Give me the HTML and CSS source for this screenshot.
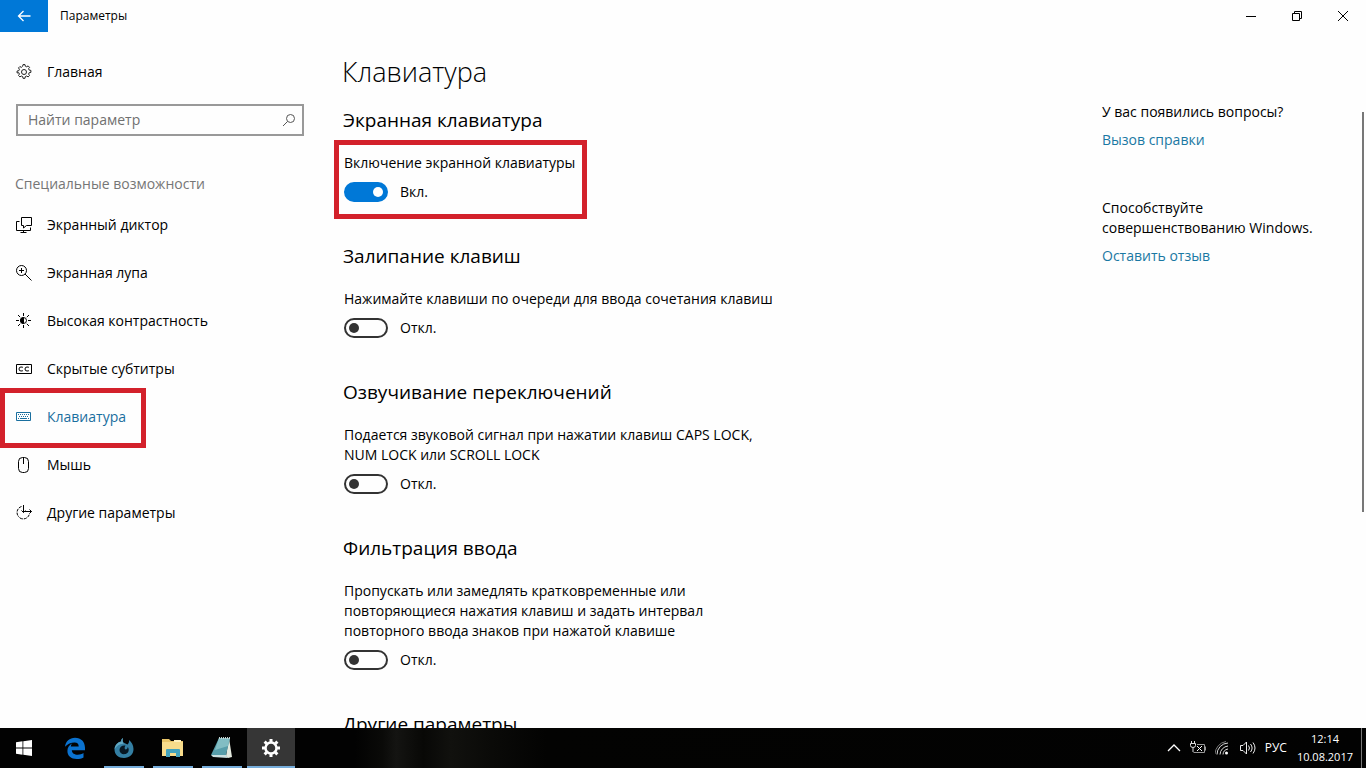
FILE: index.html
```html
<!DOCTYPE html>
<html lang="ru">
<head>
    <meta charset="UTF-8">
    <meta name="viewport" content="width=device-width, initial-scale=1.0">
    <title>Параметры</title>
    <link rel="stylesheet" href="styles.css">
</head>
<body>

    <header class="titlebar">
        <button class="back" aria-label="Назад">
            <svg width="14" height="12" viewBox="0 0 14 12" fill="none" stroke="#fff" stroke-width="1.300"><path d="M13.500 6H1.500M6.500 1L1.500 6l5 5"/></svg>
        </button>
        <span class="window-title">Параметры</span>
        <div class="window-buttons">
            <button aria-label="Свернуть">
                <svg width="12" height="12" viewBox="0 0 12 12" fill="none" stroke="#000"><path d="M1 6.500h10"/></svg>
            </button>
            <button aria-label="Восстановить">
                <svg width="12" height="12" viewBox="0 0 12 12" fill="none" stroke="#000"><path d="M1.500 3.500h7v7h-7zM3.500 3.500v-2h7v7h-2"/></svg>
            </button>
            <button aria-label="Закрыть">
                <svg width="12" height="12" viewBox="0 0 12 12" fill="none" stroke="#000"><path d="M1 1l10 10M11 1L1 11"/></svg>
            </button>
        </div>
    </header>

    <div class="window">
        <nav class="sidebar">
            <a class="nav-link" href="#">
                <svg width="16" height="16" viewBox="0 0 16 16" fill="none" stroke="#222"><circle cx="8" cy="8" r="2.500"/><path d="M6.700 2.200L7 .6h2l.3 1.600 1.400.6 1.400-.9 1.400 1.400-.9 1.400.6 1.400 1.700.3v2l-1.700.3-.6 1.400.9 1.400-1.400 1.400-1.400-.9-1.400.6-.3 1.700H7l-.3-1.700-1.400-.6-1.400.9-1.400-1.400.9-1.400-.6-1.400L1.100 9V7l1.700-.3.6-1.400-.9-1.400 1.400-1.400 1.400.9z"/></svg>
                Главная
            </a>

            <form class="search">
                <input type="search" placeholder="Найти параметр" aria-label="Найти параметр">
                <button type="button" aria-label="Поиск">
                    <svg width="14" height="14" viewBox="0 0 14 14" fill="none" stroke="#555"><circle cx="8.500" cy="5.500" r="4"/><path d="M5.500 8.500L1 13"/></svg>
                </button>
            </form>

            <h2 class="nav-title">Специальные возможности</h2>
            <a class="nav-link" href="#">
                <svg width="16" height="16" viewBox="0 0 16 16" fill="none" stroke="#000"><path d="M5.500.5h10v8h-5l-3 2.500V8.500h-2zM3.500 4.500h-3v9h14v-3M7.500 13.500v2M4.500 15.500h6"/></svg>
                Экранный диктор
            </a>
            <a class="nav-link" href="#">
                <svg width="16" height="16" viewBox="0 0 16 16" fill="none" stroke="#000"><circle cx="5.500" cy="5.500" r="5"/><path d="M9 9l6.500 6.500M3 5.500h5M5.500 3v5"/></svg>
                Экранная лупа
            </a>
            <a class="nav-link" href="#">
                <svg width="16" height="16" viewBox="0 0 16 16" fill="none" stroke="#000"><circle cx="7.500" cy="7.500" r="3"/><path d="M7.500 4.500a3 3 0 0 0 0 6z" fill="#000"/><path d="M7.500 0v3M7.500 12v3M0 7.500h3M12 7.500h3M2 2l2.200 2.200M10.800 10.800L13 13M13 2l-2.200 2.200M4.200 10.800L2 13"/></svg>
                Высокая контрастность
            </a>
            <a class="nav-link" href="#">
                <svg width="16" height="16" viewBox="0 0 16 16" fill="none" stroke="#000"><path d="M.5 3.500h15v9H.5z"/><path d="M7 6.500Q6.500 6 5 6 3 6 3 8t2 2q1.500 0 2-.5M13 6.500Q12.500 6 11 6 9 6 9 8t2 2q1.500 0 2-.5"/></svg>
                Скрытые субтитры
            </a>
            <a class="nav-link current" href="#" aria-current="page">
                <svg width="16" height="16" viewBox="0 0 16 16" fill="none" stroke="#1a6f9f"><path d="M.5 3.500h14v8H.5z"/><path d="M2 5.500h11M3 7.500h10" stroke-dasharray="1 1"/><path d="M2 9.500h1M4 9.500h7M12 9.500h1"/></svg>
                Клавиатура
            </a>
            <a class="nav-link" href="#">
                <svg width="16" height="16" viewBox="0 0 16 16" fill="none" stroke="#000"><rect x="2.500" y=".5" width="10" height="15" rx="4"/><path d="M7.500 1v6"/></svg>
                Мышь
            </a>
            <a class="nav-link" href="#">
                <svg width="16" height="16" viewBox="0 0 16 16" fill="none" stroke="#000"><path d="M5.500 1.500a6.300 6.300 0 0 0-2 11" stroke-dasharray="3 1"/><path d="M4 13a6.300 6.300 0 0 0 9.500-4.500" stroke-dasharray="3 1"/><path d="M7.500 0v7.500M5.500 5.500l2 2 2-2M7.500 6.500h8M13.500 4.500l2 2-2 2"/></svg>
                Другие параметры
            </a>
        </nav>

        <main class="content">
            <h1>Клавиатура</h1>

            <section>
                <h2>Экранная клавиатура</h2>
                <div class="setting marked">
                    <p id="osk">Включение экранной клавиатуры</p>
                    <label class="toggle"><input type="checkbox" aria-describedby="osk" checked> Вкл.</label>
                </div>
            </section>

            <section>
                <h2>Залипание клавиш</h2>
                <div class="setting">
                    <p id="sticky">Нажимайте клавиши по очереди для ввода сочетания клавиш</p>
                    <label class="toggle"><input type="checkbox" aria-describedby="sticky"> Откл.</label>
                </div>
            </section>

            <section>
                <h2>Озвучивание переключений</h2>
                <div class="setting">
                    <p id="sound">Подается звуковой сигнал при нажатии клавиш CAPS LOCK,<br>NUM LOCK или SCROLL LOCK</p>
                    <label class="toggle"><input type="checkbox" aria-describedby="sound"> Откл.</label>
                </div>
            </section>

            <section>
                <h2>Фильтрация ввода</h2>
                <div class="setting">
                    <p id="filter">Пропускать или замедлять кратковременные или<br>повторяющиеся нажатия клавиш и задать интервал<br>повторного ввода знаков при нажатой клавише</p>
                    <label class="toggle"><input type="checkbox" aria-describedby="filter"> Откл.</label>
                </div>
            </section>

            <section>
                <h2>Другие параметры</h2>
            </section>
        </main>

        <aside class="help">
            <div>
                <p>У вас появились вопросы?</p>
                <a href="#">Вызов справки</a>
            </div>
            <div>
                <p>Способствуйте совершенствованию Windows.</p>
                <a href="#">Оставить отзыв</a>
            </div>
        </aside>
        <div class="scroll-thumb"></div>
    </div>

    <footer class="taskbar">
        <button class="start" aria-label="Пуск">
            <svg width="16" height="16" viewBox="0 0 16 16" fill="#fff"><path d="M0 2.200l6.500-.9v6.200H0zM7.300 1.200L16 0v7.500H7.300zM0 8.400h6.500v6.300L0 13.800zM7.300 8.400H16V16l-8.700-1.200z"/></svg>
        </button>
        <button aria-label="Microsoft Edge">
            <svg width="22" height="22" viewBox="0 0 22 22" fill="#0b72cf"><path d="M1 9.700C1.600 4.400 5.500.8 11 .8c6.200 0 10 4.200 10 10v2.400H7.800c.2 3 2.800 4.500 6 4.500 2.200 0 4.100-.6 5.700-1.600v4.400c-1.900 1-4.100 1.500-6.700 1.500-5.700 0-9.400-3.200-9.400-8 0-3.300 1.800-6.100 4.900-7.700-.9 1-1.400 2.100-1.500 3.300h7.900c0-2.600-1.300-4.100-4.100-4.100C7 5.500 3.500 7.100 1 9.700z"/></svg>
        </button>
        <button class="open" aria-label="Браузер">
            <svg width="22" height="22" viewBox="0 0 22 22"><path d="M10 1C8 2.500 8 3.500 8.500 4.500 4.500 5 1.500 8.300 1.500 12.500c0 5 4 8.500 9.500 8.500s9.500-3.700 9.500-9c0-4-2-7-4.500-9 .3 2-.2 3.200-1.500 4.500-1.300-1-3-1.200-4-2C9.500 4.500 9.500 3 10 1z" fill="#347fa3"/><path d="M10 1C8 2.500 8 3.500 8.500 4.500 5 5 2 8 1.700 12c2-3 5-5.500 9-5.200C9.500 5 9.200 3 10 1z" fill="#63a9c3"/><path d="M12.500 8.500c-3.500-.5-6 1.500-6 4.500 0 2.500 2 4.300 4.500 4.300s4.700-1.800 4.700-4.200c0-1.300-.4-2.200-1-3 0 1.600-.9 2.300-2 2.300-1.300 0-1.500-2.200-.2-3.900z" fill="#071722"/></svg>
        </button>
        <button class="open" aria-label="Проводник">
            <svg width="22" height="20" viewBox="0 0 22 20"><path d="M0 1h7l2 2h12v3H0z" fill="#e9c568"/><path d="M0 4h21v14H0z" fill="#f8dc8b"/><path d="M12 2h7v2h-7z" fill="#fff0bd"/><path d="M4 12q0-1 1-1h12q1 0 1 1v7h-4v-4H8v4H4z" fill="#44a3bd"/></svg>
        </button>
        <button class="open" aria-label="Блокнот">
            <svg width="22" height="22" viewBox="0 0 22 22"><path d="M18 1l3 19-4 1-2-2z" fill="#e4eadf"/><path d="M8 1h11l-4 17H0z" fill="#589eaa"/><path d="M8 1h11l-2 8L4 13z" fill="#82bdc3"/><path d="M0 18h15l2 3-15-1z" fill="#cce0e0"/><path d="M8 1h11" stroke="#c5d4d2" stroke-width="2" stroke-dasharray="1 1"/></svg>
        </button>
        <button class="open active" aria-label="Параметры">
            <svg width="20" height="20" viewBox="0 0 20 20" fill="none" stroke="#fff"><circle cx="10" cy="10" r="5.500" stroke-width="2.500"/><path d="M10 4V1M10 19v-3M4 10H1M19 10h-3M5.800 5.800L3.600 3.600M16.400 16.400l-2.200-2.200M14.200 5.800l2.200-2.200M3.600 16.400l2.200-2.200" stroke-width="3"/></svg>
        </button>

        <div class="tray">
            <button aria-label="Скрытые значки">
                <svg width="14" height="16" viewBox="0 0 14 16" fill="none" stroke="#fff"><path d="M1 11l6-6 6 6" stroke-width="1.300"/></svg>
            </button>
            <button aria-label="Батарея">
                <svg width="18" height="16" viewBox="0 0 18 16" fill="none" stroke="#ddd"><path d="M2.500 1v2M5.500 1v2M1.500 3.500h5v2q0 2-2.500 2t-2.500-2zM4 7.500V12"/><path d="M8 4.500h7.500v8h-11M16.500 6.500v4" stroke="#999"/><path d="M8 6l5 5M13 6l-5 5" stroke="#fff"/></svg>
            </button>
            <button aria-label="Сеть">
                <svg width="16" height="16" viewBox="0 0 16 16" fill="none" stroke="#ddd"><path d="M2 14.500A11.500 11.500 0 0 1 13 3M5 14.500A9 9 0 0 1 13 6M8 14.500A6 6 0 0 1 13 9"/><path d="M0 14A13 13 0 0 1 11 1.500" stroke="#777"/><circle cx="11.500" cy="13" r="1.500" fill="#fff" stroke="none"/></svg>
            </button>
            <button aria-label="Громкость">
                <svg width="18" height="16" viewBox="0 0 18 16" fill="none" stroke="#eee"><path d="M1.500 5.500H4l3.500-3.500v12L4 10.500H1.500zM9.500 5.500q2 2.500 0 5M11.500 4q3.200 4 0 8M14 2.500q4 5.500 0 11"/></svg>
            </button>
            <button class="lang">РУС</button>
            <button class="clock">12:14<br>10.08.2017</button>
            <button class="show-desktop" aria-label="Свернуть все окна"></button>
        </div>
    </footer>

</body>
</html>
```

FILE: styles.css
```css
* {
    box-sizing: border-box;
}

body {
    margin: 0;
    height: 100vh;
    display: flex;
    flex-direction: column;
    overflow: hidden;
    background-color: #fefefe;
    color: #000;
    font-family: "Open Sans", "Noto Sans", sans-serif;
    font-size: 14px;
    line-height: 20px;
}

h1, h2, p {
    margin: 0;
    font-weight: 400;
}

a {
    color: #1a78a3;
    text-decoration: none;
}

button {
    display: flex;
    align-items: center;
    justify-content: center;
    padding: 0;
    border: none;
    background: none;
    color: inherit;
    font: inherit;
}

/* title bar */
.titlebar {
    display: flex;
    align-items: center;
    flex: none;
    height: 32px;
}

.back {
    width: 48px;
    height: 32px;
    background-color: #0078d7;
}

.window-title {
    margin-left: 12px;
    font-size: 12px;
}

.window-buttons {
    display: flex;
    margin-left: auto;
}

.window-buttons button {
    width: 46px;
    height: 32px;
}

/* window */
.window {
    position: relative;
    display: flex;
    flex: 1;
    min-height: 0;
    overflow: hidden;
}

.sidebar {
    flex: none;
    width: 320px;
    padding-top: 16px;
}

.nav-link {
    display: flex;
    align-items: center;
    gap: 15px;
    width: fit-content;
    height: 48px;
    padding: 0 20px 0 16px;
    color: #000;
}

.nav-link.current {
    position: relative;
    color: #1a6f9f;
}

.nav-link.current::after {
    content: "";
    position: absolute;
    inset: -5px 0 -7px;
    border: 5px solid #d3212b;
}

.search {
    display: flex;
    height: 32px;
    margin: 8px 16px 38px;
    border: 2px solid #999;
}

.search input {
    flex: 1;
    min-width: 0;
    padding: 0 10px;
    border: none;
    outline: none;
    background: none;
    font: inherit;
}

.search input::placeholder {
    color: #707070;
}

.search button {
    width: 26px;
}

.nav-title {
    margin: 0 15px 7px;
    color: #767676;
    font-size: 14px;
}

.content {
    flex: 1;
    padding: 22px 24px 0;
}

.content h1 {
    margin: 0 0 16px -2px;
    font-size: 27px;
    line-height: 36px;
    font-weight: 300;
}

.content section {
    margin-bottom: 40px;
}

.content section h2 {
    margin: 0 0 19px -1px;
    font-size: 19px;
    line-height: 28px;
}

.setting {
    width: fit-content;
}

.marked {
    position: relative;
}

.marked::after {
    content: "";
    position: absolute;
    inset: -13px -12px -17px -10px;
    border: 5px solid #d3212b;
    pointer-events: none;
}

.toggle {
    display: flex;
    align-items: center;
    gap: 12px;
    width: fit-content;
    margin-top: 9px;
}

.toggle input {
    display: flex;
    align-items: center;
    appearance: none;
    width: 44px;
    height: 20px;
    margin: 0;
    padding: 0 3px;
    border: 2px solid #333;
    border-radius: 10px;
}

.toggle input::before {
    content: "";
    width: 10px;
    height: 10px;
    border-radius: 50%;
    background-color: #333;
}

.toggle input:checked {
    justify-content: flex-end;
    border-color: #0078d7;
    background-color: #0078d7;
}

.toggle input:checked::before {
    background-color: #fff;
}

.help {
    display: flex;
    flex-direction: column;
    gap: 48px;
    flex: none;
    width: 264px;
    padding: 70px 40px 0 0;
}

.help a {
    display: block;
    width: fit-content;
    margin-top: 8px;
}

.scroll-thumb {
    position: absolute;
    top: 80px;
    right: 2px;
    width: 2px;
    height: 400px;
    background-color: #777;
}

/* taskbar */
.taskbar {
    display: flex;
    flex: none;
    gap: 1px;
    height: 40px;
    background: linear-gradient(90deg, #020202 26%, #0a0a08 28%, #141412 29%, #080806 31%, #11110e 33%, #0a0a08 36%, #030302 40%, #020202);
    color: #fff;
}

.taskbar > button {
    position: relative;
    width: 48px;
    height: 40px;
}

.taskbar .start {
    margin-right: 2px;
}

.open::after {
    content: "";
    position: absolute;
    inset: auto 4px 0;
    height: 2px;
    background-color: #76addb;
}

.open.active {
    background-color: #363636;
}

.open.active::after {
    inset: auto 0 0;
}

.tray {
    display: flex;
    align-items: center;
    gap: 8px;
    margin-left: auto;
    font-size: 12px;
}

.clock {
    margin-left: 2px;
    font-size: 11px;
    line-height: 18px;
}

.show-desktop {
    width: 5px;
    height: 40px;
    border-left: 1px solid #777;
}
```
